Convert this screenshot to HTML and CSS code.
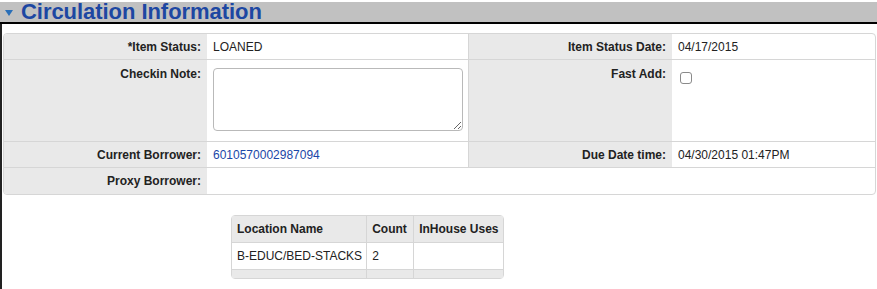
FILE: index.html
```html
<!DOCTYPE html>
<html>
<head>
  <meta charset="utf-8">
    <title>Circulation Information</title>
    <link rel="stylesheet" href="styles.css">
</head>
<body>
    <div class="section">
        <div class="section-head">
            <span class="toggle"></span>
            <h2>Circulation Information</h2>
        </div>
        <div class="section-body">
            <div class="form-grid">
                <div class="lbl">*Item Status:</div>
                <div class="val mid">LOANED</div>
                <div class="lbl">Item Status Date:</div>
                <div class="val last">04/17/2015</div>

                <div class="lbl top">Checkin Note:</div>
                <div class="val top mid"><textarea class="note"></textarea></div>
                <div class="lbl top">Fast Add:</div>
                <div class="val top last"><span class="check"></span></div>

                <div class="lbl">Current Borrower:</div>
                <div class="val mid"><a href="#">6010570002987094</a></div>
                <div class="lbl">Due Date time:</div>
                <div class="val last">04/30/2015 01:47PM</div>

                <div class="lbl end">Proxy Borrower:</div>
                <div class="val end wide"></div>
            </div>

            <table class="loc">
                <thead>
                    <tr><th class="c1">Location Name</th><th class="c2">Count</th><th class="c3">InHouse Uses</th></tr>
                </thead>
                <tbody>
                    <tr><td>B-EDUC/BED-STACKS</td><td>2</td><td></td></tr>
                    <tr class="foot"><td></td><td></td><td></td></tr>
                </tbody>
            </table>
        </div>
    </div>
</body>
</html>
```

FILE: styles.css
```css
body {
    margin: 0;
    font-family: "Liberation Sans", Arial, sans-serif;
    font-size: 12px;
    color: #222;
    background: #fff;
}

.section-head {
    margin-top: 2px;
    height: 20px;
    background: #c1c1c1;
    border-bottom: 2px solid #000;
    display: flex;
    align-items: center;
}
.toggle {
    width: 0;
    height: 0;
    margin: 1px 8px 0 5px;
    border-left: 4px solid transparent;
    border-right: 4px solid transparent;
    border-top: 6px solid #2a6fb8;
}
.section-head h2 {
    margin: 0;
    font-size: 22px;
    line-height: 20px;
    font-weight: bold;
    color: #1d47a2;
    letter-spacing: -0.05px;
}

.section-body {
    border-left: 2px solid #222;
    padding: 9px 1px 11px 1px;
}

.form-grid {
    display: grid;
    grid-template-columns: 203px 262px 203px 1fr;
    grid-template-rows: 26px 82px 26px 26px;
    border: 1px solid #d6d6d6;
    border-radius: 4px;
    overflow: hidden;
}
.lbl {
    background: #e9e9e9;
    font-weight: bold;
    text-align: right;
    padding: 0 6px 0 0;
    border-bottom: 1px solid #d6d6d6;
    display: flex;
    align-items: center;
    justify-content: flex-end;
}
.val {
    padding: 0 0 0 6px;
    border-bottom: 1px solid #d6d6d6;
    display: flex;
    align-items: center;
}
.val.mid { border-right: 1px solid #d6d6d6; }
.top { align-items: flex-start; padding-top: 7px; }
.val.top { padding-top: 8px; }
.end { border-bottom: none; }
.wide { grid-column: span 3; }

.val a {
    color: #1a47a8;
    text-decoration: none;
}

.note {
    width: 250px;
    height: 63px;
    margin: 0;
    padding: 0;
    box-sizing: border-box;
    border: 1px solid #b9b9b9;
    border-radius: 4px;
    resize: both;
}
.check {
    display: block;
    width: 10px;
    height: 10px;
    margin: 4px 0 0 2px;
    border: 1px solid #8a8a8a;
    border-radius: 3px;
    background: #fff;
}

.loc {
    margin: 20px 0 0 228px;
    border-collapse: separate;
    border-spacing: 0;
    border: 1px solid #d6d6d6;
    border-radius: 4px;
    table-layout: fixed;
}
.loc th, .loc td {
    height: 26px;
    padding: 0 4px 0 5px;
    text-align: left;
    border-bottom: 1px solid #d6d6d6;
    border-right: 1px solid #d6d6d6;
    white-space: nowrap;
    overflow: hidden;
}
.loc th:last-child, .loc td:last-child { border-right: none; }
.loc th {
    background: #e9e9e9;
    font-weight: bold;
}
.loc .c1 { width: 123px; }
.loc .c2 { width: 37px; }
.loc .c3 { width: 79px; }
.loc tr.foot td {
    height: 8px;
    background: #e9e9e9;
    border-bottom: none;
}
```
